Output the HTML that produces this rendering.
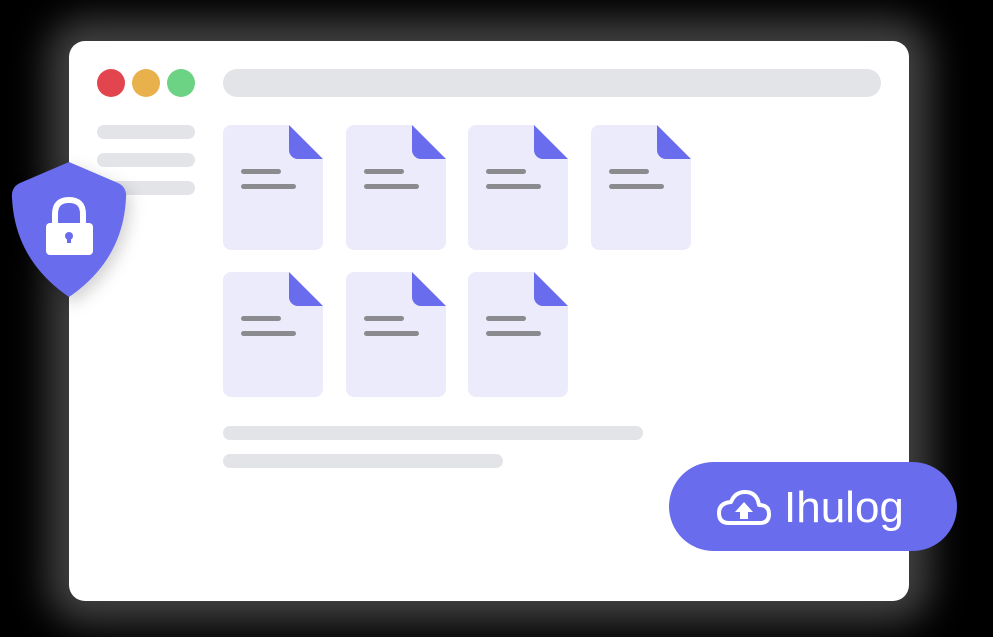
<!DOCTYPE html>
<html><head><style>
*{margin:0;padding:0;box-sizing:border-box}
body{width:993px;height:637px;background:#000;position:relative;overflow:hidden;font-family:"Liberation Sans",sans-serif}
.a{position:absolute}
.win{left:69px;top:41px;width:840px;height:560px;background:#fff;border-radius:16px;box-shadow:0 0 36px 22px rgba(130,130,130,.5)}
.bar{background:#e3e4e8;border-radius:8px;height:14px}
.doc{width:100px;height:125px;background:#ecebfb;border-radius:8px;overflow:hidden}
.doc .f{position:absolute;right:0;top:0;width:34px;height:34px;background:#686ced;border-bottom-left-radius:9px;clip-path:polygon(0 0,100% 100%,0 100%,0 0);}
.doc .c{position:absolute;right:0;top:0;width:0;height:0;border-top:34px solid #fff;border-left:34px solid transparent}
.doc .l1,.doc .l2{position:absolute;left:18px;height:5px;border-radius:3px;background:#8b8b8f}
.l1{top:44px;width:40px}.l2{top:59px;width:55px}
</style></head><body>
<div class="a win"></div>
<div class="a" style="left:97px;top:69px;width:28px;height:28px;border-radius:50%;background:#e2454e"></div>
<div class="a" style="left:132px;top:69px;width:28px;height:28px;border-radius:50%;background:#e8b14b"></div>
<div class="a" style="left:167px;top:69px;width:28px;height:28px;border-radius:50%;background:#6bd383"></div>
<div class="a" style="left:223px;top:69px;width:658px;height:28px;border-radius:14px;background:#e3e4e8"></div>
<div class="a bar" style="left:97px;top:125px;width:98px"></div>
<div class="a bar" style="left:97px;top:153px;width:98px"></div>
<div class="a bar" style="left:97px;top:181px;width:98px"></div>
<div class="a bar" style="left:223px;top:426px;width:420px"></div>
<div class="a bar" style="left:223px;top:454px;width:280px"></div>

<div class="a doc" style="left:223px;top:125px"><div class="c"></div><div class="f"></div><div class="l1"></div><div class="l2"></div></div>
<div class="a doc" style="left:346px;top:125px"><div class="c"></div><div class="f"></div><div class="l1"></div><div class="l2"></div></div>
<div class="a doc" style="left:468px;top:125px"><div class="c"></div><div class="f"></div><div class="l1"></div><div class="l2"></div></div>
<div class="a doc" style="left:591px;top:125px"><div class="c"></div><div class="f"></div><div class="l1"></div><div class="l2"></div></div>
<div class="a doc" style="left:223px;top:272px"><div class="c"></div><div class="f"></div><div class="l1"></div><div class="l2"></div></div>
<div class="a doc" style="left:346px;top:272px"><div class="c"></div><div class="f"></div><div class="l1"></div><div class="l2"></div></div>
<div class="a doc" style="left:468px;top:272px"><div class="c"></div><div class="f"></div><div class="l1"></div><div class="l2"></div></div>

<svg class="a" style="left:0;top:150px;filter:drop-shadow(4px 6px 8px rgba(0,0,0,.18))" width="140" height="160" viewBox="0 0 140 160">
<path d="M69 12 L118 33 Q127 37 126 48 Q123 110 69 147 Q15 110 12 48 Q11 37 20 33 Z" fill="#686ced"/>
<path d="M55 76 V64 Q55 50 69 50 Q83 50 83 64 V76" fill="none" stroke="#fff" stroke-width="6"/>
<rect x="46" y="73" width="47" height="32" rx="4" fill="#fff"/>
<circle cx="69" cy="86" r="4" fill="#686ced"/><rect x="67" y="86" width="4" height="7" fill="#686ced"/>
</svg>

<div class="a" style="left:669px;top:462px;width:288px;height:89px;border-radius:45px;background:#686ced"></div>
<svg class="a" style="left:715px;top:487px" width="58" height="40" viewBox="0 0 58 40">
<path d="M14 36 H45 Q54 36 54 27 Q54 18 44 18 Q42 5 30 5 Q20 5 16 15 Q4 16 4 26 Q4 36 14 36 Z" fill="none" stroke="#fff" stroke-width="4" stroke-linejoin="round"/>
<path d="M29 15 L38 25 H33 V32 H25 V25 H20 Z" fill="#fff"/>
</svg>
<div class="a" style="left:784px;top:483px;font-size:44px;line-height:50px;color:#fff">Ihulog</div>
</body></html>
